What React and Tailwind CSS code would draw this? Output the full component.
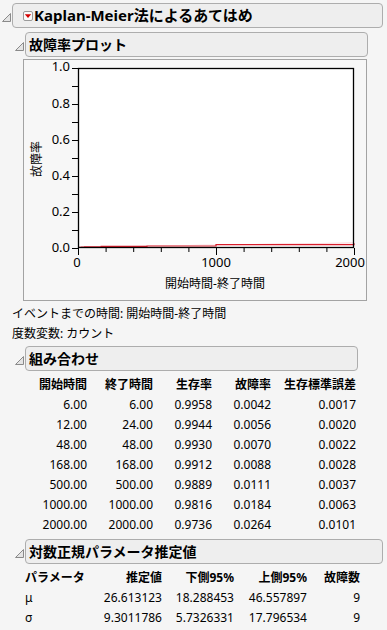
import React from "react";

function Tri() {
  return (
    <svg width="9" height="9" viewBox="0 0 9 9" className="shrink-0">
      <polygon points="0.5,8.5 8.5,8.5 8.5,0.5" fill="#e4e4e4" stroke="#8a8a8a" strokeWidth="1" />
    </svg>
  );
}

function RedBtn() {
  return (
    <svg width="10" height="10" viewBox="0 0 10 10" className="shrink-0">
      <rect x="0.5" y="0.5" width="9" height="9" rx="1.5" fill="#fafafa" stroke="#9a9a9a" />
      <polygon points="1.8,3.2 8.2,3.2 5,7" fill="#d40000" />
    </svg>
  );
}

function Chart() {
  const X0 = 54, X1 = 330, Y0 = 188, Y1 = 8;
  const sx = (t) => X0 + (t / 2000) * (X1 - X0);
  const sy = (f) => Y0 - f * (Y0 - Y1);
  const steps = [
    [0, 0.0042], [24, 0.0056], [48, 0.007], [168, 0.0088], [500, 0.0111], [1000, 0.0184], [2000, 0.0264],
  ];
  let d = `M${sx(0)},${sy(0.0042)}`;
  for (let i = 1; i < steps.length; i++) {
    d += ` H${sx(steps[i][0])} V${sy(steps[i][1])}`;
  }
  const up = [
    [0, 0.0042], [168, 0.009], [500, 0.013], [1000, 0.02], [2000, 0.03],
  ];
  const band =
    up.map(([t, f]) => `${sx(t)},${sy(f)}`).join(" ") +
    " " +
    [...steps].reverse().map(([t, f]) => `${sx(t)},${sy(f)}`).join(" ");
  const yTicks = [];
  for (let i = 0; i <= 10; i++) yTicks.push(i);
  const xTicks = [];
  for (let i = 0; i <= 10; i++) xTicks.push(i);
  return (
    <svg width="342" height="240" viewBox="0 0 342 240" className="block overflow-visible">
      <rect x={X0} y={Y1} width={X1 - X0} height={Y0 - Y1} fill="#ffffff" />
      <polygon points={band} fill="#f6a9b1" opacity="0.7" />
      <path d={d} fill="none" stroke="#d81e2c" strokeWidth="1.2" />
      <rect x={X0 + 0.5} y={Y1 + 0.5} width={X1 - X0 - 1} height={Y0 - Y1 - 1} fill="none" stroke="#000" strokeWidth="1.3" />
      {yTicks.map((i) => (
        <line key={"y" + i} x1={X0 - 6} x2={X0} y1={sy(i / 10) + 0.5} y2={sy(i / 10) + 0.5} stroke="#000" strokeWidth="1" />
      ))}
      {xTicks.map((i) => (
        <line key={"x" + i} x1={sx(i * 200) + 0.5} x2={sx(i * 200) + 0.5} y1={Y0} y2={Y0 + (i % 5 === 0 ? 7 : 4)} stroke="#000" strokeWidth="1" />
      ))}
      {["0.0", "0.2", "0.4", "0.6", "0.8", "1.0"].map((s, i) => (
        <text key={s} x={X0 - 8} y={sy(i * 0.2) + (i === 5 ? 0 : 0.5)} textAnchor="end" dominantBaseline="middle" fontSize="13" fill="#000">
          {s}
        </text>
      ))}
      <text x={53} y={204} textAnchor="middle" dominantBaseline="middle" fontSize="13" fill="#000">0</text>
      <text x={192} y={204} textAnchor="middle" dominantBaseline="middle" fontSize="13" fill="#000">1000</text>
      <text x={326} y={204} textAnchor="middle" dominantBaseline="middle" fontSize="13" fill="#000">2000</text>
      <text x={191} y={225} textAnchor="middle" dominantBaseline="middle" fontSize="12" fill="#000">開始時間-終了時間</text>
      <text x={0} y={0} transform="translate(14,99) rotate(-90)" textAnchor="middle" dominantBaseline="middle" fontSize="12" fill="#000">故障率</text>
    </svg>
  );
}

const t3 = [
  ["6.00", "6.00", "0.9958", "0.0042", "0.0017"],
  ["12.00", "24.00", "0.9944", "0.0056", "0.0020"],
  ["48.00", "48.00", "0.9930", "0.0070", "0.0022"],
  ["168.00", "168.00", "0.9912", "0.0088", "0.0028"],
  ["500.00", "500.00", "0.9889", "0.0111", "0.0037"],
  ["1000.00", "1000.00", "0.9816", "0.0184", "0.0063"],
  ["2000.00", "2000.00", "0.9736", "0.0264", "0.0101"],
];

const t4 = [
  ["μ", "26.613123", "18.288453", "46.557897", "9"],
  ["σ", "9.3011786", "5.7326331", "17.796534", "9"],
];

function SubHeader({ title, width }) {
  return (
    <div className="flex items-center">
      <div className="ml-[3px] mt-[3px]"><Tri /></div>
      <div
        className={`ml-[1px] h-[25px] ${width} flex items-center pl-[3px] rounded-[4px] border border-[#adadad] bg-[#eeeeee] text-[14px] font-bold text-black`}
      >
        {title}
      </div>
    </div>
  );
}

export default function App() {
  return (
    <div className="w-[387px] h-[630px] overflow-hidden bg-[#f5f5f5] text-black font-['Noto_Sans','Noto_Sans_CJK_JP',sans-serif] text-[12px]">
      <div className="flex items-center pt-[3px]">
        <div className="ml-[2px] mt-[3px]"><Tri /></div>
        <div className="ml-[1px] h-[25px] w-[371px] flex items-center gap-[1px] pl-[10px] rounded-[4px] border border-[#adadad] bg-[#eeeeee] text-[15px] font-bold leading-none">
          <RedBtn />
          <span>Kaplan-Meier法によるあてはめ</span>
        </div>
      </div>
      <div className="pl-[12px]">
        <div className="mt-[4px]">
          <SubHeader title="故障率プロット" width="w-[343px]" />
        </div>
        <div className="ml-[11px] mt-[2px] w-[344px] h-[242px] border border-[#a3a3a3] bg-[#f7f7f7]">
          <Chart />
        </div>
        <div className="mt-[3px] h-[20px] flex items-center">イベントまでの時間: 開始時間-終了時間</div>
        <div className="h-[20px] flex items-center">度数変数: カウント</div>
        <div className="mt-[2px]">
          <SubHeader title="組み合わせ" width="w-[333px]" />
        </div>
        <div className="mt-[4px] ml-[12px] grid grid-cols-[63px_66px_59px_59px_85px] auto-rows-[20px] items-center text-right">
          {["開始時間", "終了時間", "生存率", "故障率", "生存標準誤差"].map((h) => (
            <div key={h} className="font-bold">{h}</div>
          ))}
          {t3.map((r, i) => r.map((c, j) => <div key={i + "-" + j}>{c}</div>))}
        </div>
        <div className="mt-[4px]">
          <SubHeader title="対数正規パラメータ推定値" width="w-[358px]" />
        </div>
        <div className="mt-[4px] ml-[13px] grid grid-cols-[60px_77px_72px_73px_53px] auto-rows-[20px] items-center">
          {["パラメータ", "推定値", "下側95%", "上側95%", "故障数"].map((h, j) => (
            <div key={h} className={`font-bold ${j === 0 ? "text-left" : "text-right"}`}>{h}</div>
          ))}
          {t4.map((r, i) =>
            r.map((c, j) => (
              <div key={i + "-" + j} className={j === 0 ? "text-left" : "text-right"}>{c}</div>
            ))
          )}
        </div>
      </div>
    </div>
  );
}
